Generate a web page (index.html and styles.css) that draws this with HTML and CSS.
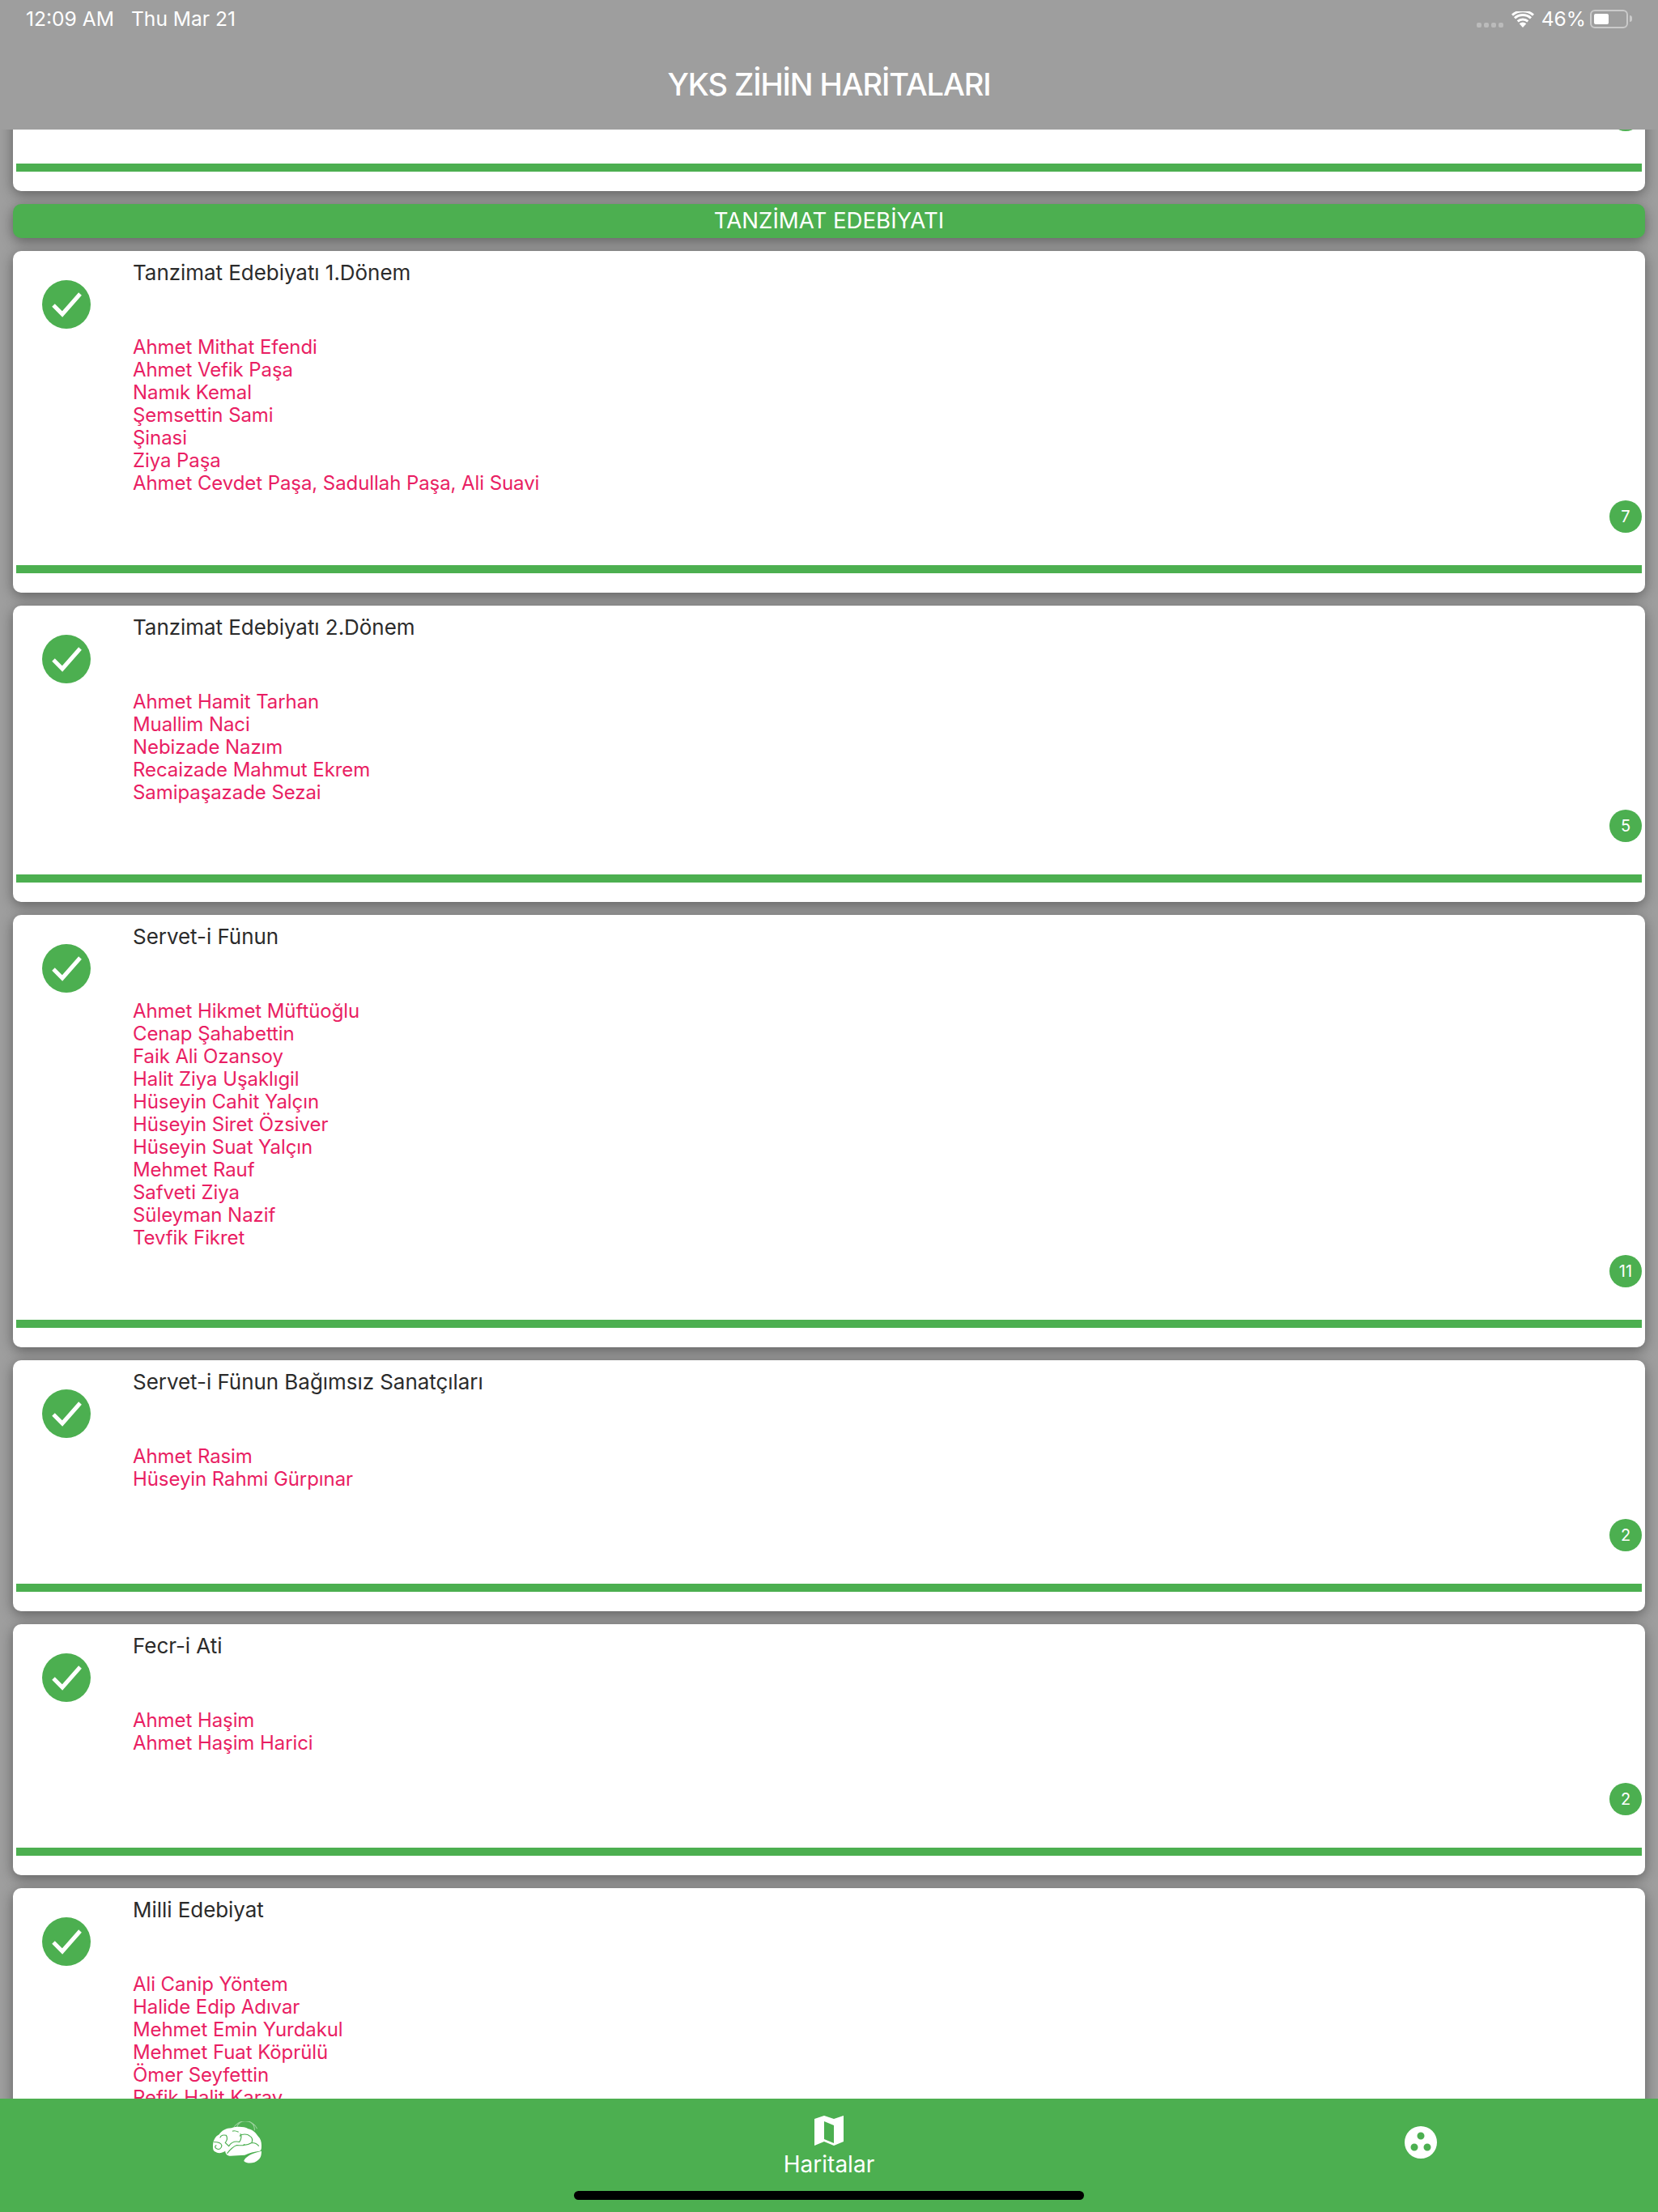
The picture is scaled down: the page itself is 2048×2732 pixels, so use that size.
FILE: index.html
```html
<!DOCTYPE html>
<html lang="tr">
<head>
  <meta charset="UTF-8" />
  <title>YKS Zihin Haritaları</title>
  <link rel="stylesheet" href="styles.css">
</head>
<body>
  <div class="app">
    <header class="topbar">
      <div class="statusbar">
        <div class="status-left">
          <span>12:09 AM</span>
          <span>Thu Mar 21</span>
        </div>
        <div class="status-right">
          <div class="signal"><i></i><i></i><i></i><i></i></div>
          <svg class="wifi" viewBox="0 0 28 20">
            <path d="M14 20l-4.300-4.800a6.500 6.500 0 0 1 8.600 0z" fill="#fff"/>
            <path d="M7.700 13a9.500 9.500 0 0 1 12.600 0M4 9a15 15 0 0 1 20 0M1 5.200a20 20 0 0 1 26 0" fill="none" stroke="#fff" stroke-width="3" transform="translate(0 -.6)"/>
          </svg>
          <span class="percent">46%</span>
          <div class="battery"><div class="battery-fill"></div></div>
          <div class="battery-nub"></div>
        </div>
      </div>
      <h1>YKS ZİHİN HARİTALARI</h1>
    </header>

    <main class="content">
      <div class="list">
        <div class="card card-cut">
          <div class="badge-row"><span class="badge"></span></div>
          <div class="bar"></div>
        </div>

        <div class="section">TANZİMAT EDEBİYATI</div>

        <div class="card">
          <div class="card-main">
            <svg class="check" viewBox="0 0 60 60"><circle cx="30" cy="30" r="30" fill="#4caf50"/><path d="M14 31l11 11 22-25" fill="none" stroke="#fff" stroke-width="5"/></svg>
            <div class="card-text">
              <div class="card-title">Tanzimat Edebiyatı 1.Dönem</div>
              <ul class="names">
                <li>Ahmet Mithat Efendi</li>
                <li>Ahmet Vefik Paşa</li>
                <li>Namık Kemal</li>
                <li>Şemsettin Sami</li>
                <li>Şinasi</li>
                <li>Ziya Paşa</li>
                <li>Ahmet Cevdet Paşa, Sadullah Paşa, Ali Suavi</li>
              </ul>
            </div>
          </div>
          <div class="badge-row"><span class="badge">7</span></div>
          <div class="bar"></div>
        </div>

        <div class="card">
          <div class="card-main">
            <svg class="check" viewBox="0 0 60 60"><circle cx="30" cy="30" r="30" fill="#4caf50"/><path d="M14 31l11 11 22-25" fill="none" stroke="#fff" stroke-width="5"/></svg>
            <div class="card-text">
              <div class="card-title">Tanzimat Edebiyatı 2.Dönem</div>
              <ul class="names">
                <li>Ahmet Hamit Tarhan</li>
                <li>Muallim Naci</li>
                <li>Nebizade Nazım</li>
                <li>Recaizade Mahmut Ekrem</li>
                <li>Samipaşazade Sezai</li>
              </ul>
            </div>
          </div>
          <div class="badge-row"><span class="badge">5</span></div>
          <div class="bar"></div>
        </div>

        <div class="card">
          <div class="card-main">
            <svg class="check" viewBox="0 0 60 60"><circle cx="30" cy="30" r="30" fill="#4caf50"/><path d="M14 31l11 11 22-25" fill="none" stroke="#fff" stroke-width="5"/></svg>
            <div class="card-text">
              <div class="card-title">Servet-i Fünun</div>
              <ul class="names">
                <li>Ahmet Hikmet Müftüoğlu</li>
                <li>Cenap Şahabettin</li>
                <li>Faik Ali Ozansoy</li>
                <li>Halit Ziya Uşaklıgil</li>
                <li>Hüseyin Cahit Yalçın</li>
                <li>Hüseyin Siret Özsiver</li>
                <li>Hüseyin Suat Yalçın</li>
                <li>Mehmet Rauf</li>
                <li>Safveti Ziya</li>
                <li>Süleyman Nazif</li>
                <li>Tevfik Fikret</li>
              </ul>
            </div>
          </div>
          <div class="badge-row"><span class="badge">11</span></div>
          <div class="bar"></div>
        </div>

        <div class="card">
          <div class="card-main">
            <svg class="check" viewBox="0 0 60 60"><circle cx="30" cy="30" r="30" fill="#4caf50"/><path d="M14 31l11 11 22-25" fill="none" stroke="#fff" stroke-width="5"/></svg>
            <div class="card-text">
              <div class="card-title">Servet-i Fünun Bağımsız Sanatçıları</div>
              <ul class="names">
                <li>Ahmet Rasim</li>
                <li>Hüseyin Rahmi Gürpınar</li>
              </ul>
            </div>
          </div>
          <div class="badge-row"><span class="badge">2</span></div>
          <div class="bar"></div>
        </div>

        <div class="card">
          <div class="card-main">
            <svg class="check" viewBox="0 0 60 60"><circle cx="30" cy="30" r="30" fill="#4caf50"/><path d="M14 31l11 11 22-25" fill="none" stroke="#fff" stroke-width="5"/></svg>
            <div class="card-text">
              <div class="card-title">Fecr-i Ati</div>
              <ul class="names">
                <li>Ahmet Haşim</li>
                <li>Ahmet Haşim Harici</li>
              </ul>
            </div>
          </div>
          <div class="badge-row"><span class="badge">2</span></div>
          <div class="bar"></div>
        </div>

        <div class="card">
          <div class="card-main">
            <svg class="check" viewBox="0 0 60 60"><circle cx="30" cy="30" r="30" fill="#4caf50"/><path d="M14 31l11 11 22-25" fill="none" stroke="#fff" stroke-width="5"/></svg>
            <div class="card-text">
              <div class="card-title">Milli Edebiyat</div>
              <ul class="names">
                <li>Ali Canip Yöntem</li>
                <li>Halide Edip Adıvar</li>
                <li>Mehmet Emin Yurdakul</li>
                <li>Mehmet Fuat Köprülü</li>
                <li>Ömer Seyfettin</li>
                <li>Refik Halit Karay</li>
              </ul>
            </div>
          </div>
        </div>
      </div>
    </main>

    <footer class="tabs">
      <div class="tab">
        <svg class="brain" viewBox="17 11 55 51" preserveAspectRatio="none">
          <path d="M40 20a14.500 14.500 0 0 1 27 0M44 19a10 10 0 0 1 20 3" fill="none" stroke="#fff" stroke-opacity=".45" stroke-width="1"/>
          <path d="M17 41C17 34 20 29 24 27C27 22 32 19 38 19C44 17 52 17 57 20C62 21 66 25 68 29C71 32 72 36 72 40C72 44 72 46 70 47C64 48 58 49 53 52C47 52 42 53 37 53C33 53 31 50 31 47C27 50 22 50 20 48C17 47 17 44 17 41z" fill="#fff"/>
          <path d="M52 59C54 54 60 50 72 47C72 52 71 56 68 58C64 62 56 63 52 59z" fill="#fff"/>
          <path d="M18 36c3 0 8 1 9 4 0 4-3 6-6 4-2-1-2-3 0-4M25 31c1-3 4-4 7-3 2 3 1 6-1 9l4 4c3-5 8-6 12-5 2-3 3-6 1-10M47 29c3-3 9-3 12 0 3 2 3 5 2 8-3 2-7 3-10 3M33 50c3-4 6-8 11-10 4 0 7 1 9-1M61 37c3 0 6 1 8 4M39 23c2-1 5 0 7 1" fill="none" stroke="#4caf50" stroke-width="1.100"/>
        </svg>
      </div>
      <div class="tab tab-active">
        <svg class="map" viewBox="0 0 36 37">
          <path fill-rule="evenodd" d="M0 4l12-4 12 4 12-4v32l-12 5-12-5-12 5zM12 7v22l12 5V12z" fill="#fff"/>
        </svg>
        <span class="tab-label">Haritalar</span>
      </div>
      <div class="tab">
        <svg class="dots" viewBox="0 0 40 40">
          <path fill-rule="evenodd" d="M20 0a20 20 0 1 1 0 40a20 20 0 1 1 0-40zM20 7.500a4.500 4.500 0 1 0 0 9a4.500 4.500 0 1 0 0-9zM12 21.500a4.500 4.500 0 1 0 0 9a4.500 4.500 0 1 0 0-9zM28 21.500a4.500 4.500 0 1 0 0 9a4.500 4.500 0 1 0 0-9z" fill="#fff"/>
        </svg>
      </div>
      <div class="home-bar"></div>
    </footer>
  </div>
</body>
</html>
```

FILE: styles.css
```css
* {
  box-sizing: border-box;
}

body {
  margin: 0;
  font-family: Inter, "Noto Sans", sans-serif;
  background-color: #9e9e9e;
}

.app {
  display: flex;
  flex-direction: column;
  width: 2048px;
  height: 2732px;
  overflow: hidden;
}

/* Top bar */
.topbar {
  position: relative;
  z-index: 2;
  height: 160px;
  flex-shrink: 0;
  background-color: #9e9e9e;
  color: #fff;
}

.statusbar {
  display: flex;
  justify-content: space-between;
  align-items: center;
  height: 46px;
  padding: 0 32px;
  font-size: 24.6px;
}

.status-left {
  display: flex;
  gap: 21px;
}

.status-right {
  display: flex;
  align-items: center;
}

.signal {
  display: flex;
  gap: 3px;
  margin-top: 16px;
  margin-right: 10px;
}

.signal i {
  width: 6px;
  height: 6px;
  border-radius: 2px;
  background-color: rgba(255,255,255,0.3);
}

.wifi {
  width: 28px;
  height: 20px;
  margin-top: 2px;
  margin-right: 9px;
}

.percent {
  margin-right: 5px;
}

.battery {
  width: 47px;
  height: 23px;
  padding: 3px;
  border: 2px solid rgba(255,255,255,0.45);
  border-radius: 6px;
}

.battery-fill {
  width: 18px;
  height: 100%;
  border-radius: 2px;
  background-color: #fff;
}

.battery-nub {
  width: 3px;
  height: 8px;
  margin-left: 2px;
  border-radius: 0 3px 3px 0;
  background-color: rgba(255,255,255,0.45);
}

h1 {
  margin: 0;
  padding-top: 35px;
  text-align: center;
  font-size: 38px;
  line-height: 46px;
  font-weight: 500;
  letter-spacing: -1.1px;
}

/* List */
.content {
  flex: 1;
  overflow: hidden;
}

.list {
  display: flex;
  flex-direction: column;
  gap: 16px;
  margin-top: -58px;
  padding: 0 16px;
}

.card {
  flex-shrink: 0;
  background-color: #fff;
  border-radius: 10px;
  padding: 13px 4px 24px;
  box-shadow: 0 4px 16px rgba(0,0,0,0.4);
}

.card-main {
  display: flex;
}

.check {
  width: 60px;
  height: 60px;
  flex-shrink: 0;
  margin: 23px 0 0 32px;
}

.card-text {
  margin-left: 52px;
}

.card-title {
  font-size: 26px;
  line-height: 28px;
  letter-spacing: -0.05px;
  color: #2b2b2b;
}

.names {
  min-height: 84px;
  margin: 64px 0 0;
  padding: 0;
  list-style: none;
  font-size: 24px;
  line-height: 28px;
  letter-spacing: -0.08px;
  color: #e91e63;
}

.badge-row {
  display: flex;
  justify-content: flex-end;
  margin-top: 7px;
}

.badge {
  display: flex;
  justify-content: center;
  align-items: center;
  width: 40px;
  height: 40px;
  border-radius: 50%;
  background-color: #4caf50;
  color: #fff;
  font-size: 20px;
}

.bar {
  height: 10px;
  margin-top: 40px;
  background-color: #4caf50;
}

.section {
  flex-shrink: 0;
  height: 42px;
  border-radius: 10px;
  background-color: #4caf50;
  color: #fff;
  text-align: center;
  font-size: 27.6px;
  line-height: 40px;
  box-shadow: 0 4px 16px rgba(0,0,0,0.4);
}

/* Bottom tabs */
.tabs {
  position: relative;
  z-index: 2;
  display: grid;
  grid-template-columns: 586px 1fr 586px;
  height: 140px;
  flex-shrink: 0;
  background-color: #4caf50;
}

.tab {
  display: flex;
  flex-direction: column;
  align-items: center;
  padding-top: 34px;
}

.tab-active {
  padding-top: 21px;
}

.brain {
  width: 60px;
  height: 52px;
  margin-top: -6px;
}

.map {
  width: 36px;
  height: 37px;
}

.tab-label {
  margin-top: 5px;
  color: #fff;
  font-size: 28px;
  line-height: 36px;
}

.dots {
  width: 40px;
  height: 40px;
}

.home-bar {
  position: absolute;
  left: 709px;
  bottom: 15px;
  width: 630px;
  height: 11px;
  border-radius: 6px;
  background-color: #000;
}
```
